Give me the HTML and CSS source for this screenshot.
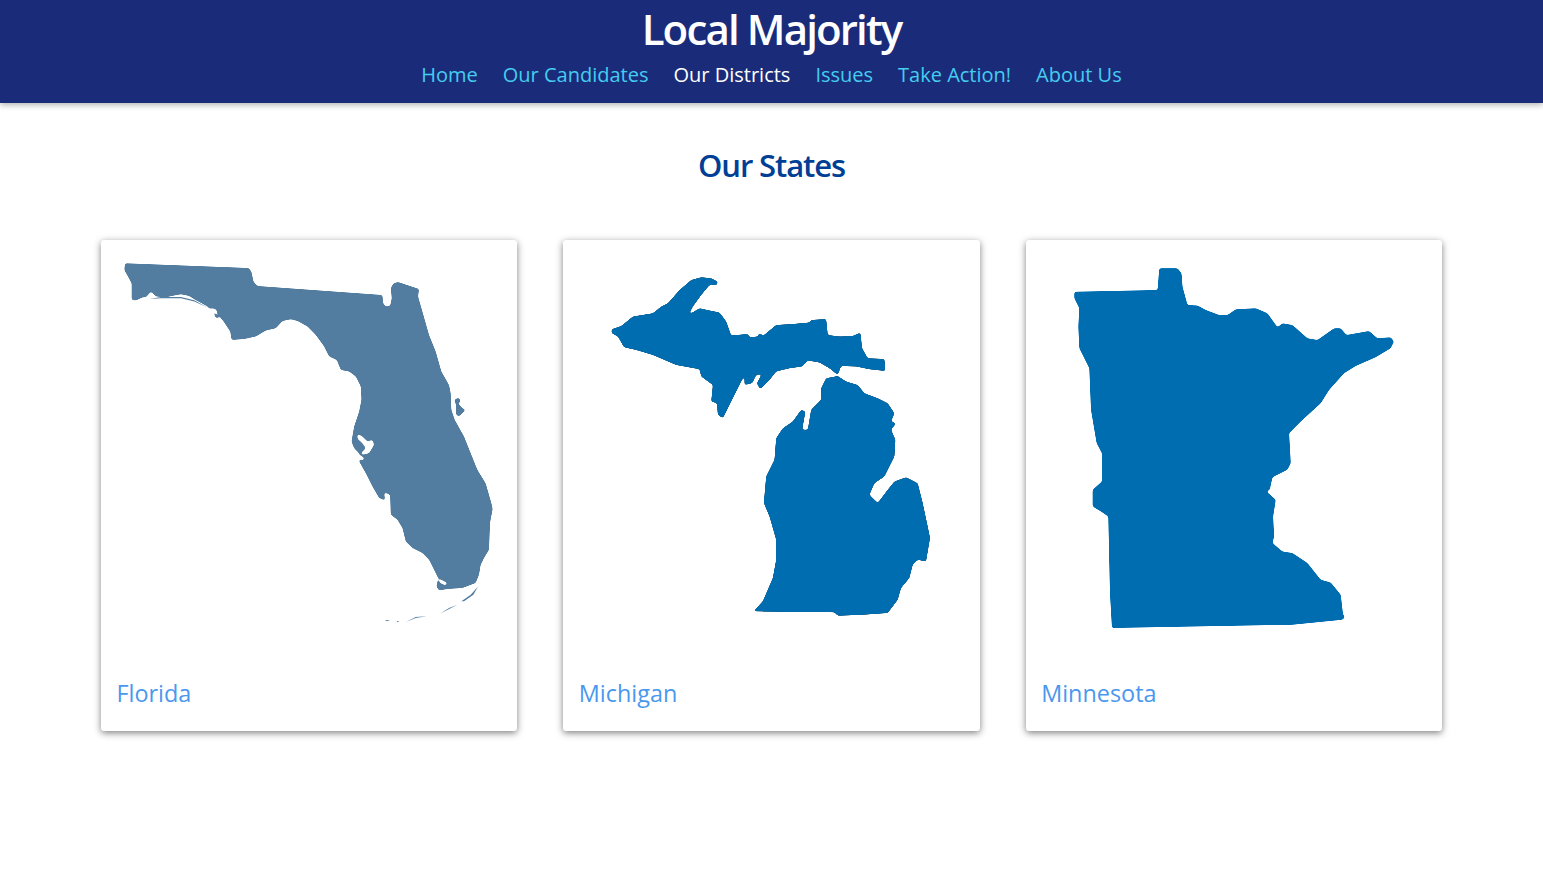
FILE: index.html
```html
<!DOCTYPE html>
<html lang="en">
<head>
    <meta charset="UTF-8">
    <title>Local Majority</title>
    <link rel="stylesheet" href="styles.css">
</head>
<body>
    <header class="topbar">
        <h1 class="brand">Local Majority</h1>
        <nav class="nav">
            <a href="#">Home</a>
            <a href="#">Our Candidates</a>
            <a href="#" class="active">Our Districts</a>
            <a href="#">Issues</a>
            <a href="#">Take Action!</a>
            <a href="#">About Us</a>
        </nav>
    </header>
    <main class="content">
        <h2 class="title">Our States</h2>
        <div class="cards">
            <a href="#" class="card">
                <svg class="map florida" viewBox="0 0 1250 1250">
                    <defs>
                        <!-- rounds the polygon corners like a scaled up picture -->
                        <filter id="soft" x="0" y="0" width="100%" height="100%" filterUnits="userSpaceOnUse">
                            <feGaussianBlur stdDeviation="3.5"/>
                            <feComponentTransfer>
                                <feFuncA type="linear" slope="5" intercept="-2"/>
                            </feComponentTransfer>
                        </filter>
                    </defs>
                    <path filter="url(#soft)" fill-rule="evenodd" d="M72 70L444 84L452 96L458 125L470 138L845 165L847 190L855 200L868 198L873 175L870 145L878 130L892 126L955 147L952 170L965 215L985 285L1005 335L1022 395L1045 435L1050 460L1052 510L1062 540L1090 590L1130 690L1155 730L1172 790L1176 808L1168 850L1165 930L1150 955L1140 975L1135 1005L1125 1030L1085 1045L1040 1048L1015 1052L1007 1040L1012 1015L1000 990L985 960L965 940L935 925L915 905L905 865L890 840L870 825L868 765L850 757L853 782L835 775L815 740L795 700L775 665L775 640L760 625L752 605L760 560L775 515L782 480L780 440L765 410L745 395L720 390L708 360L685 350L670 320L645 285L620 260L590 243L570 238L545 243L525 265L495 272L465 290L430 297L392 300L388 275L365 240L320 200L280 178L265 168L240 163L220 167L195 172L165 170L150 155L135 172L125 172L105 182L92 180L92 130L70 90Z
                    M770 582L785 590L800 605L815 600L820 615L805 640L785 645L780 640L795 625L785 610L770 597Z
                    M775 645L792 655L785 662L775 658Z
                    M320 203L345 207L352 225L362 232L345 235L335 215Z
                    M1012 1015L1040 1030L1035 1037L1018 1030Z
                    M1060 480L1075 473L1080 485L1072 490L1085 505L1095 510L1085 520L1075 530L1066 525L1066 495Z"/>
                    <path d="M145 177L180 171L240 171L280 181L320 203L280 185L240 175L180 175Z
                    M1132 1040L1118 1065L1090 1085L1082 1085L1110 1065Z
                    M1070 1095L1018 1122L1045 1105Z
                    M978 1130L945 1135L915 1147L945 1132Z
                    M853 1141L868 1142L858 1145Z
                    M888 1144L896 1145L890 1148Z"/>
                </svg>
                <span class="label">Florida</span>
            </a>
            <a href="#" class="card">
                <svg class="map michigan" viewBox="0 0 1250 1250">
                    <path filter="url(#soft)" d="M146 268L175 258L210 230L270 220L295 200L315 190L350 150L385 120L415 112L445 115L465 125L462 135L440 135L415 165L390 200L378 222L385 220L410 205L440 212L470 218L490 245L505 287L555 282L560 292L585 290L590 278L600 288L640 255L690 252L740 248L745 240L790 237L795 285L830 290L870 288L893 278L898 325L915 355L965 357L968 393L920 388L880 380L835 378L825 405L800 385L770 368L735 362L718 380L680 385L640 395L620 420L592 448L582 430L597 402L580 405L568 430L545 435L545 405L520 455L480 535L465 525L462 490L445 485L450 435L415 410L410 388L340 375L270 345L220 330L183 322L165 290L146 280Z
                    M825 408L850 425L885 435L905 460L945 475L975 490L995 520L985 545L1000 550L985 570L998 600L995 650L975 690L965 710L935 730L920 765L945 790L975 750L995 725L1030 712L1065 730L1080 790L1095 860L1102 895L1090 965L1065 960L1050 975L1040 1015L1015 1045L1005 1080L975 1120L900 1125L825 1128L815 1118L572 1115L600 1085L630 1015L640 960L640 900L620 830L603 790L610 710L635 660L640 595L660 565L690 545L715 510L728 515L718 570L735 570L745 510L775 480L775 445L790 415Z"/>
                </svg>
                <span class="label">Michigan</span>
            </a>
            <a href="#" class="card">
                <svg class="map minnesota" viewBox="0 0 1250 1250">
                    <path filter="url(#soft)" d="M145 155L395 150L400 85L455 85L467 100L470 140L485 195L515 197L540 210L580 225L605 225L630 208L690 205L725 220L755 262L770 250L800 255L845 295L875 300L925 265L945 265L962 285L1030 273L1055 295L1095 292L1105 305L1095 325L1050 352L990 378L955 400L910 450L885 490L825 545L790 580L795 670L785 690L740 712L732 750L722 755L750 780L742 830L745 890L740 910L770 935L800 940L845 970L885 1020L915 1028L945 1065L952 1125L958 1132L950 1140L800 1155L258 1165L252 1060L247 830L225 815L200 800L200 750L228 725L228 640L212 610L195 510L190 385L160 325L157 260L160 205L145 175Z"/>
                </svg>
                <span class="label">Minnesota</span>
            </a>
        </div>
    </main>
</body>
</html>
```

FILE: styles.css
```css
body{
    margin: 0;
    background: #ffffff;
    font-family: "Open Sans", sans-serif;
}
a{
    text-decoration: none
}
.topbar{
    height: 103px;
    background: #1a2c79;
    box-shadow: 0 2px 6px rgba(0,0,0,.3);
    text-align: center
}
.brand{
    margin: 0;
    padding-top: 2px;
    font-size: 42px;
    line-height: 54px;
    font-weight: 600;
    letter-spacing: -1.85px;
    color: #ffffff
}
.nav{
    display: flex;
    justify-content: center;
    gap: 25px;
    margin-top: 5px;
    font-size: 20px;
    line-height: 28px
}
.nav a{
    color: #45ccf0
}
.nav a.active{
    color: #ffffff
}
.content{
    padding-bottom: 60px
}
.title{
    margin: 42px 0 54px;
    text-align: center;
    font-size: 31px;
    line-height: 41px;
    font-weight: 600;
    letter-spacing: -1.1px;
    color: #003f95
}
.cards{
    display: grid;
    grid-template-columns: repeat(3, 1fr);
    gap: 46px;
    padding: 0 101px
}
.card{
    display: block;
    height: 491px;
    border-radius: 3px;
    background: #ffffff;
    box-shadow: 0 2px 7px rgba(0,0,0,.5)
}
.map{
    display: block;
    width: 100%
}
.florida{
    fill: #527da0
}
.michigan{
    fill: #026db0;
    filter: drop-shadow(.4px .8px 0 #333333)
}
.minnesota{
    fill: #026db0
}
.label{
    display: block;
    padding: 17px 16px 0 15.5px;
    font-size: 23.4px;
    line-height: 40px;
    color: #4a98ee
}
```
